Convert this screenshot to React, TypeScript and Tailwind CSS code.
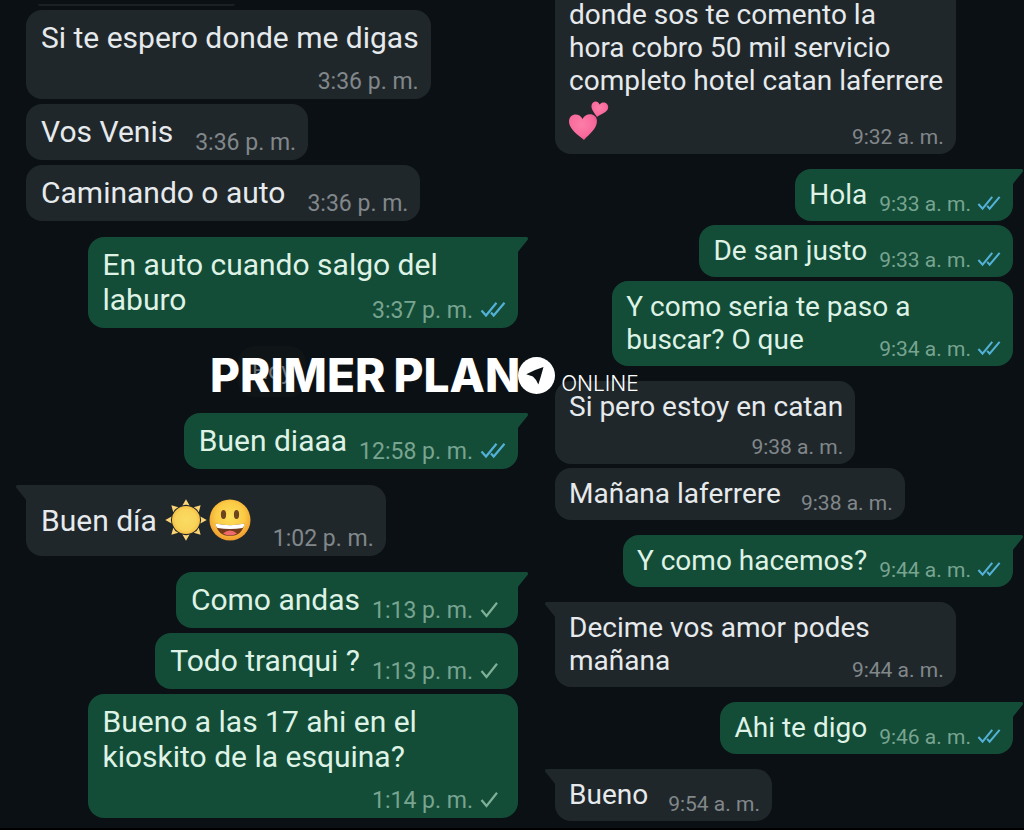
import React from "react";

type Size = "lg" | "md";

interface Message {
  text: string;
  time: string;
  mine?: boolean;
  ticks?: "sent" | "read";
  // where the time sits: next to the text, over its last line, or under it
  stamp?: "inline" | "over" | "below";
  tail?: boolean;
  spaced?: boolean;
  cut?: boolean;
  emoji?: "sunny" | "hearts";
}

const leftChat: Message[] = [
  { text: "Si te espero donde me digas", time: "3:36 p. m.", stamp: "below" },
  { text: "Vos Venis", time: "3:36 p. m." },
  { text: "Caminando o auto", time: "3:36 p. m." },
  {
    text: "En auto cuando salgo del\nlaburo",
    time: "3:37 p. m.",
    mine: true,
    ticks: "read",
    stamp: "over",
    tail: true,
    spaced: true,
  },
];

const leftChatToday: Message[] = [
  { text: "Buen diaaa", time: "12:58 p. m.", mine: true, ticks: "read", tail: true, spaced: true },
  { text: "Buen día", time: "1:02 p. m.", tail: true, spaced: true, emoji: "sunny" },
  { text: "Como andas", time: "1:13 p. m.", mine: true, ticks: "sent", tail: true, spaced: true },
  { text: "Todo tranqui ?", time: "1:13 p. m.", mine: true, ticks: "sent" },
  {
    text: "Bueno a las 17 ahi en el\nkioskito de la esquina?",
    time: "1:14 p. m.",
    mine: true,
    ticks: "sent",
    stamp: "below",
  },
];

const rightChat: Message[] = [
  {
    text: "donde sos te comento la\nhora cobro 50 mil servicio\ncompleto hotel catan laferrere",
    time: "9:32 a. m.",
    stamp: "over",
    cut: true,
    emoji: "hearts",
  },
  { text: "Hola", time: "9:33 a. m.", mine: true, ticks: "read", tail: true, spaced: true },
  { text: "De san justo", time: "9:33 a. m.", mine: true, ticks: "read" },
  {
    text: "Y como seria te paso a\nbuscar? O que",
    time: "9:34 a. m.",
    mine: true,
    ticks: "read",
    stamp: "over",
  },
  { text: "Si pero estoy en catan", time: "9:38 a. m.", stamp: "below", spaced: true },
  { text: "Mañana laferrere", time: "9:38 a. m." },
  { text: "Y como hacemos?", time: "9:44 a. m.", mine: true, ticks: "read", tail: true, spaced: true },
  {
    text: "Decime vos amor podes\nmañana",
    time: "9:44 a. m.",
    stamp: "over",
    tail: true,
    spaced: true,
  },
  { text: "Ahi te digo", time: "9:46 a. m.", mine: true, ticks: "read", tail: true, spaced: true },
  { text: "Bueno", time: "9:54 a. m.", tail: true, spaced: true },
];

function Ticks({ kind, size }: { kind: "sent" | "read"; size: Size }) {
  return (
    <svg
      viewBox="0 0 26 18"
      fill="none"
      strokeWidth="2.2"
      className={`shrink-0 ${size === "lg" ? "h-[18px] w-[26px]" : "h-[17px] w-6"} ${
        kind === "read" ? "stroke-[#53b1d8]" : "stroke-[#7fb09a]"
      }`}
    >
      {kind === "read" ? (
        <>
          <path d="M1.5 8.500L6 13.500L16.500 .8" />
          <path d="M11 10.500L13.700 13.500L24.500 .8" />
        </>
      ) : (
        <path d="M1.500 8L6.500 14L17 .8" />
      )}
    </svg>
  );
}

function Tail({ mine }: { mine?: boolean }) {
  return (
    <svg
      viewBox="0 0 11 15"
      className={`absolute top-0 h-[15px] w-[11px] ${
        mine ? "left-full fill-[#144d37]" : "right-full -scale-x-100 fill-[#20272b]"
      }`}
    >
      <path d="M0 0H8.500Q11 .5 9.500 3L1 13.500L0 15Z" />
    </svg>
  );
}

function Sun() {
  return (
    <svg viewBox="0 0 42 42" className="h-[42px] w-[42px]">
      <defs>
        <radialGradient id="sun" cx="50%" cy="50%" r="50%">
          <stop offset="0" stopColor="#fbdc62" />
          <stop offset="0.75" stopColor="#f9d35a" />
          <stop offset="1" stopColor="#f6bf45" />
        </radialGradient>
      </defs>
      {[0, 45, 90, 135, 180, 225, 270, 315].map((angle) => (
        <path
          key={angle}
          d="M21 .3L24.600 6.600Q21 5 17.400 6.600Z"
          fill="#fbd477"
          transform={`rotate(${angle} 21 21)`}
        />
      ))}
      <circle cx="21" cy="21" r="14" fill="url(#sun)" />
    </svg>
  );
}

function Grin() {
  return (
    <svg viewBox="0 0 42 42" className="h-[42px] w-[42px]">
      <defs>
        <radialGradient id="grin" cx="50%" cy="42%" r="58%">
          <stop offset="0" stopColor="#fde05c" />
          <stop offset="0.6" stopColor="#fbcb45" />
          <stop offset="1" stopColor="#f09a2c" />
        </radialGradient>
      </defs>
      <circle cx="21" cy="21" r="20.500" fill="url(#grin)" />
      <ellipse cx="14.500" cy="15.500" rx="2.600" ry="4.500" fill="#6d4420" />
      <ellipse cx="27.500" cy="15.500" rx="2.600" ry="4.500" fill="#6d4420" />
      <path d="M6.500 24.500Q21 28 35.500 24.500Q33 37 21 37T6.500 24.500Z" fill="#733b1c" />
      <path d="M14 34.500Q21 28.500 28 34.500Q21 38.500 14 34.500Z" fill="#f06a6a" />
      <path d="M6.500 24.500Q21 28 35.500 24.500Q35.500 27.500 33.500 29Q21 31 8.500 29Q6.500 27.500 6.500 24.500Z" fill="#fff" />
    </svg>
  );
}

function Hearts() {
  return (
    <svg viewBox="0 0 40 40" className="h-10 w-10">
      <defs>
        <radialGradient id="heart" cx="45%" cy="40%" r="65%">
          <stop offset="0" stopColor="#fc7ea9" />
          <stop offset="0.7" stopColor="#f86a9b" />
          <stop offset="1" stopColor="#e04f86" />
        </radialGradient>
      </defs>
      <path
        d="M15 39C9 34 0 28 0 20.500C0 12.500 10 11 13.500 18C16.500 11 28 11.500 28 20C28 28 20 33 15 39Z"
        fill="url(#heart)"
      />
      <path
        d="M28 16C25.500 12 22 8.500 22.500 4.500C23.200 -.2 29 -1 30.500 3.500C33.500 -.3 39.500 1.500 39.200 6.500C38.800 11.500 32.500 12.500 28 16Z"
        fill="url(#heart)"
      />
    </svg>
  );
}

function Bubble({ message, size }: { message: Message; size: Size }) {
  const { text, time, mine, ticks, stamp = "inline", tail, spaced, cut, emoji } = message;
  const lg = size === "lg";

  let layout = "flex items-end";
  if (stamp === "over") layout = "grid w-7/8";
  if (stamp === "below") layout = mine ? "flex w-7/8 flex-col" : "flex flex-col";

  let gap = "";
  if (stamp === "inline") {
    if (mine) gap = "ml-3";
    else gap = lg ? "ml-[22px]" : "ml-5";
  }

  let margin = lg ? "mt-[5px]" : "mt-1";
  if (spaced) margin = lg ? "mt-4" : "mt-[15px]";
  if (cut) margin = "-mt-[11px]";

  return (
    <li
      className={`relative rounded-2xl pr-3 ${layout} ${margin} ${
        lg ? "pt-2.5 pb-[3px] pl-[15px]" : "pt-[9px] pb-1 pl-3.5"
      } ${mine ? "self-end bg-[#144d37]" : "self-start bg-[#20272b]"} ${
        tail ? (mine ? "rounded-tr-none" : "rounded-tl-none") : ""
      } ${cut ? "rounded-t-none" : ""}`}
    >
      {tail && <Tail mine={mine} />}
      <div
        className={`col-start-1 row-start-1 whitespace-pre-line ${
          lg ? "pb-2 text-[30px] leading-[35px]" : "pb-1.5 text-[28px] leading-[33px]"
        } ${mine ? "text-[#def3e6]" : "text-[#e6eaec]"} ${
          emoji === "sunny" ? "flex items-center" : ""
        }`}
      >
        {text}
        {emoji === "sunny" && (
          <span className="ml-2 flex h-[50px] items-center gap-0.5">
            <Sun />
            <Grin />
          </span>
        )}
        {emoji === "hearts" && (
          <span className="flex h-[47px] items-center">
            <Hearts />
          </span>
        )}
      </div>
      <div
        className={`col-start-1 row-start-1 flex items-center self-end justify-self-end whitespace-nowrap ${gap} ${
          lg ? "gap-[7px] text-[23px] leading-7" : "gap-1.5 text-[21px] leading-[26px]"
        } ${mine ? "text-[#78a491]" : "text-[#81878a]"} ${stamp === "below" ? "mt-[5px]" : ""}`}
      >
        <time>{time}</time>
        {ticks && <Ticks kind={ticks} size={size} />}
      </div>
    </li>
  );
}

function Logo() {
  return (
    <div className="absolute top-[350px] left-[210px] flex items-center font-['Inter',sans-serif] text-white">
      <span className="flex gap-2 text-[46px] leading-[50px] font-extrabold">
        <span>PRIMER</span>
        <span>PLAN</span>
      </span>
      <svg viewBox="0 0 36 36" className="-ml-0.5 h-[37px] w-[37px]">
        <circle cx="18" cy="18" r="18" fill="#fff" />
        <path d="M8 16.800Q16 12.500 24.800 9.800Q22.500 18.500 19.800 26.800Q18 22 14.500 19Z" fill="#0b1014" />
      </svg>
      <span className="mb-1 ml-1.5 self-end text-[21px] leading-6 font-light">ONLINE</span>
    </div>
  );
}

export default function App() {
  return (
    <main className="relative grid min-h-screen grid-cols-[529fr_495fr] overflow-hidden border-b-2 border-black bg-[#0b1014] font-['Roboto',sans-serif]">
      <section className="pr-[11px] pl-[26px]">
        <div className="mt-1 ml-3 h-0.5 w-2/5 rounded-b bg-[#1a2023]" />
        <ol className="-mt-px flex flex-col">
          {leftChat.map((message, index) => (
            <Bubble key={index} message={message} size="lg" />
          ))}
          <li className="mt-[18px] self-center rounded-2xl bg-[#0f1417] px-3.5 py-2 text-[23px] leading-[35px] text-[#6b7073]">
            Hoy
          </li>
          {leftChatToday.map((message, index) => (
            <Bubble key={index} message={message} size="lg" />
          ))}
        </ol>
      </section>
      <section className="pr-[11px] pl-[26px]">
        <ol className="flex flex-col">
          {rightChat.map((message, index) => (
            <Bubble key={index} message={message} size="md" />
          ))}
        </ol>
      </section>
      <Logo />
    </main>
  );
}
